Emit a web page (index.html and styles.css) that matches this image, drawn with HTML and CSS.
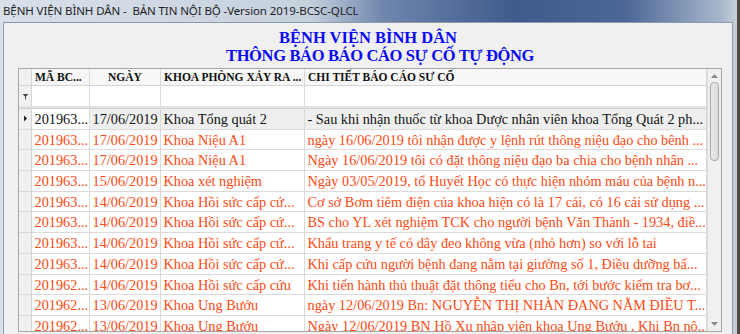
FILE: index.html
```html
<!DOCTYPE html>
<html lang="vi">
<head>
    <meta charset="UTF-8">
    <title>BẢN TIN NỘI BỘ</title>
    <link rel="stylesheet" href="styles.css">
</head>
<body>

    <div class="window">
        <div class="titlebar">BỆNH VIỆN BÌNH DÂN -&nbsp; BẢN TIN NỘI BỘ -Version 2019-BCSC-QLCL</div>

        <div class="client">
            <h1 class="heading">
                <span>BỆNH VIỆN BÌNH DÂN</span>
                <span class="sub">THÔNG BÁO BÁO CÁO SỰ CỐ TỰ ĐỘNG</span>
            </h1>

            <div class="grid">
                <div class="grid-body">
                    <div class="row head">
                        <div class="sel"></div>
                        <div class="cell">MÃ BC...</div>
                        <div class="cell center">NGÀY</div>
                        <div class="cell">KHOA PHÒNG XẢY RA ...</div>
                        <div class="cell">CHI TIẾT BÁO CÁO SƯ CỐ</div>
                    </div>
                    <div class="row filter">
                        <div class="sel">
                            <svg width="7" height="7" viewBox="0 0 7 7"><path d="M0.5 1h6L4 3.6V6.5H3V3.6z" fill="#444"/></svg>
                        </div>
                        <div class="cell"></div>
                        <div class="cell"></div>
                        <div class="cell"></div>
                        <div class="cell"></div>
                    </div>
                    <div class="split"></div>

                    <div class="row data current">
                        <div class="sel">
                            <svg width="5" height="7" viewBox="0 0 5 7"><path d="M1 0.5l3 3-3 3z" fill="#222"/></svg>
                        </div>
                        <div class="cell focus">201963...</div>
                        <div class="cell">17/06/2019</div>
                        <div class="cell">Khoa Tổng quát 2</div>
                        <div class="cell">- Sau khi nhận thuốc từ khoa Dược nhân viên khoa Tổng Quát 2 ph...</div>
                    </div>
                    <div class="row data alert">
                        <div class="sel"></div>
                        <div class="cell">201963...</div>
                        <div class="cell">17/06/2019</div>
                        <div class="cell">Khoa Niệu A1</div>
                        <div class="cell">ngày 16/06/2019 tôi nhận được y lệnh rút thông niệu đạo cho bênh ...</div>
                    </div>
                    <div class="row data alert">
                        <div class="sel"></div>
                        <div class="cell">201963...</div>
                        <div class="cell">17/06/2019</div>
                        <div class="cell">Khoa Niệu A1</div>
                        <div class="cell">Ngày 16/06/2019 tôi có đặt thông niệu đạo ba chia cho bệnh nhân ...</div>
                    </div>
                    <div class="row data alert">
                        <div class="sel"></div>
                        <div class="cell">201963...</div>
                        <div class="cell">15/06/2019</div>
                        <div class="cell">Khoa xét nghiệm</div>
                        <div class="cell">Ngày 03/05/2019, tổ Huyết Học có thực hiện nhóm máu của bệnh n...</div>
                    </div>
                    <div class="row data alert">
                        <div class="sel"></div>
                        <div class="cell">201963...</div>
                        <div class="cell">14/06/2019</div>
                        <div class="cell">Khoa Hồi sức cấp cứ...</div>
                        <div class="cell">Cơ sở Bơm tiêm điện của khoa hiện có là 17 cái, có 16 cái sử dụng ...</div>
                    </div>
                    <div class="row data alert">
                        <div class="sel"></div>
                        <div class="cell">201963...</div>
                        <div class="cell">14/06/2019</div>
                        <div class="cell">Khoa Hồi sức cấp cứ...</div>
                        <div class="cell">BS cho YL xét nghiệm TCK cho người bệnh Văn Thành - 1934, điề...</div>
                    </div>
                    <div class="row data alert">
                        <div class="sel"></div>
                        <div class="cell">201963...</div>
                        <div class="cell">14/06/2019</div>
                        <div class="cell">Khoa Hồi sức cấp cứ...</div>
                        <div class="cell">Khẩu trang y tế có dây đeo không vừa (nhỏ hơn) so với lỗ tai</div>
                    </div>
                    <div class="row data alert">
                        <div class="sel"></div>
                        <div class="cell">201963...</div>
                        <div class="cell">14/06/2019</div>
                        <div class="cell">Khoa Hồi sức cấp cứ...</div>
                        <div class="cell">Khi cấp cứu người bệnh đang nằm tại giường số 1, Điều dưỡng bấ...</div>
                    </div>
                    <div class="row data alert">
                        <div class="sel"></div>
                        <div class="cell">201962...</div>
                        <div class="cell">14/06/2019</div>
                        <div class="cell">Khoa Hồi sức cấp cứu</div>
                        <div class="cell">Khi tiến hành thủ thuật đặt thông tiểu cho Bn, tới bước kiểm tra bơ...</div>
                    </div>
                    <div class="row data alert">
                        <div class="sel"></div>
                        <div class="cell">201962...</div>
                        <div class="cell">13/06/2019</div>
                        <div class="cell">Khoa Ung Bướu</div>
                        <div class="cell">ngày 12/06/2019 Bn: NGUYỄN THỊ NHÀN ĐANG NẰM ĐIỀU T...</div>
                    </div>
                    <div class="row data alert">
                        <div class="sel"></div>
                        <div class="cell">201962...</div>
                        <div class="cell">13/06/2019</div>
                        <div class="cell">Khoa Ung Bướu</div>
                        <div class="cell">Ngày 12/06/2019 BN Hồ Xu nhập viện khoa Ung Bướu , Khi Bn nộ...</div>
                    </div>
                </div>

                <div class="vscroll">
                    <svg class="arrow" width="7" height="4" viewBox="0 0 7 4"><path d="M0 4l3.5-4 3.5 4z" fill="#8a8a8a"/></svg>
                    <div class="thumb"></div>
                    <div class="track"></div>
                    <svg class="arrow" width="7" height="4" viewBox="0 0 7 4"><path d="M0 0l3.5 4 3.5-4z" fill="#8a8a8a"/></svg>
                </div>
            </div>
        </div>
    </div>

</body>
</html>
```

FILE: styles.css
```css
* {
    margin: 0;
    padding: 0;
    box-sizing: border-box;
}

body {
    width: 740px;
    height: 334px;
    overflow: hidden;
    background: #4f4c44;
}

.window {
    width: 737px;
    height: 334px;
    display: flex;
    flex-direction: column;
    background: linear-gradient(90deg, #d8e0ea 0%, #c6d1de 42%, #6f86ad 52%, #3f5a8c 70%, #4d6797 85%, #a9b8cc 98%, #c9d0d9 100%);
}

.titlebar {
    height: 22px;
    padding: 3px 0 0 3px;
    font-family: "Noto Sans", sans-serif;
    font-size: 11.5px;
    letter-spacing: -0.1px;
    color: #1e1e1e;
    white-space: nowrap;
}

.client {
    flex: 1;
    margin: 0 4px 0 3px;
    background: #f0f0f0;
    border: 1px solid #8f9cae;
    border-bottom: none;
    display: flex;
    flex-direction: column;
    align-items: center;
    overflow: hidden;
}

.heading {
    display: flex;
    flex-direction: column;
    align-items: center;
    padding-top: 6px;
    font-family: "Liberation Serif", serif;
    font-size: 16.5px;
    font-weight: bold;
    line-height: 18px;
    color: #0a0af5;
}

.heading .sub {
    letter-spacing: -0.35px;
    margin-left: 24px;
}

.grid {
    align-self: flex-start;
    margin: 3px 0 0 14px;
    width: 704px;
    height: 264px;
    border: 1px solid #a7a7a7;
    background: #fff;
    display: flex;
    overflow: hidden;
}

.grid-body {
    flex: 1;
    display: flex;
    flex-direction: column;
}

.row {
    display: grid;
    grid-template-columns: 13px 58px 71px 144px 1fr;
    border-bottom: 1px solid #dadada;
    flex-shrink: 0;
}

.sel {
    background: #f0f1f3;
    border-right: 1px solid #d3d3d3;
    display: flex;
    align-items: center;
    justify-content: center;
}

.cell {
    border-right: 1px solid #dadada;
    padding-left: 2px;
    white-space: nowrap;
    overflow: hidden;
    font-family: "Liberation Serif", serif;
}

.center {
    text-align: center;
}

.head {
    height: 17px;
    background: #f6f6f6;
    border-bottom-color: #d4d4d4;
}

.head .cell {
    font-size: 11.5px;
    font-weight: bold;
    line-height: 16px;
    color: #111;
    padding-left: 3px;
    background: #f7f7f7;
}

.head .center {
    padding-left: 0;
}

.filter {
    height: 20px;
    border-bottom: none;
}

.split {
    height: 3px;
    background: #e2e2e2;
    border-bottom: 1px solid #d0d0d0;
    flex-shrink: 0;
}

.data {
    height: 20.7px;
}

.data .cell {
    font-size: 14.3px;
    line-height: 20px;
    padding-left: 2.5px;
}

.current .cell {
    background: #efefef;
    color: #141414;
}

.current .focus {
    background: #fff;
}

.alert .cell {
    color: #ff4a12;
}

.vscroll {
    width: 14px;
    background: #f0f0f0;
    border-left: 1px solid #dcdcdc;
    display: flex;
    flex-direction: column;
    align-items: center;
    padding: 5px 0 5px;
}

.arrow {
    flex-shrink: 0;
}

.thumb {
    margin-top: 4px;
    width: 9px;
    height: 79px;
    border: 1px solid #a9a9a9;
    border-radius: 4px;
    background: linear-gradient(90deg, #e9e9e9, #dcdcdc);
}

.track {
    flex: 1;
}
```
